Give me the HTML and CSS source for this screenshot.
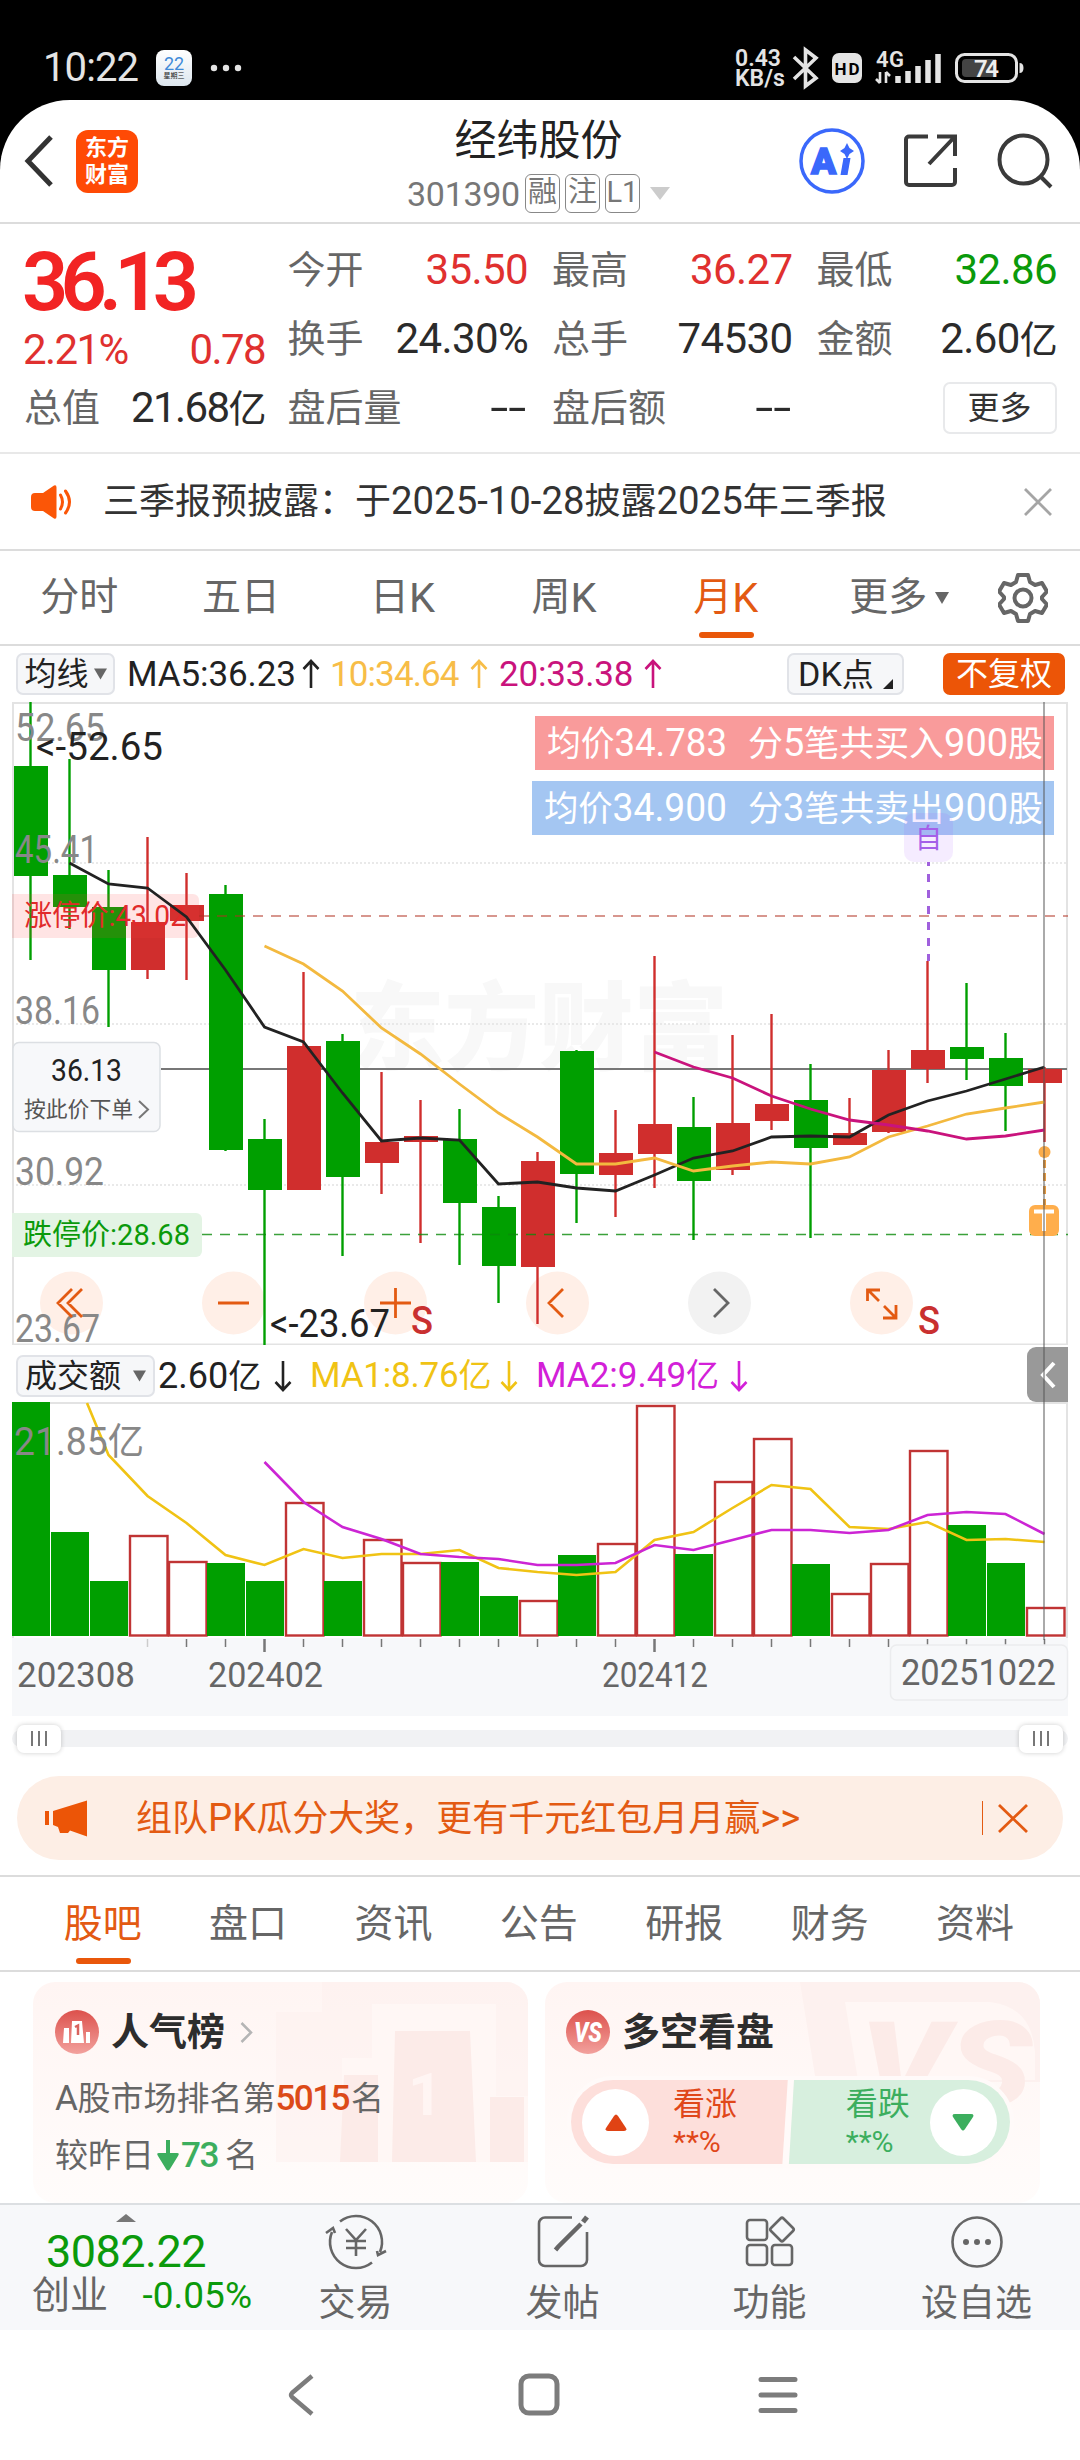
FILE: index.html
```html
<!DOCTYPE html>
<html lang="zh-CN">
<head>
<meta charset="utf-8">
<title>经纬股份 301390</title>
<link rel="stylesheet" href="styles.css">
</head>
<body>
<div class="status">
  <span class="clock">10:22</span>
  <span class="cal"><b>22</b><i>星期三</i></span>
  <svg class="dots" width="32" height="8" viewBox="0 0 32 8"><circle cx="4" cy="4" r="3.2"/><circle cx="16" cy="4" r="3.2"/><circle cx="28" cy="4" r="3.2"/></svg>
  <span class="net"><span>0.43</span><span>KB/s</span></span>
  <svg class="sys" width="290" height="46" viewBox="790 45 290 46">
    <path d="M794 57 L816 78 L805.500 86 V50 L816 58 L794 79" fill="none" stroke="#e4e4e4" stroke-width="3.600"/>
    <rect x="832" y="53" width="30" height="30" rx="7" fill="#e4e4e4"/>
    <text x="847" y="74.500" font-size="17" font-weight="700" text-anchor="middle" textLength="25" fill="#000">HD</text>
    <text x="876" y="67" font-size="22" font-weight="600" textLength="28" fill="#e4e4e4">4G</text>
    <path d="M880 72V83M880 83l-4-4M886 83V72M886 72l4 4" fill="none" stroke="#e4e4e4" stroke-width="2.600"/>
    <path d="M898 83v-7M908 83v-12M918 83v-17M928 83v-23M938 83v-29" stroke="#e4e4e4" stroke-width="5.500"/>
    <rect x="956.500" y="54.500" width="60" height="27" rx="8" fill="none" stroke="#e4e4e4" stroke-width="3"/>
    <path d="M1019.500 63q4 0 4 5t-4 5z" fill="#e4e4e4"/>
    <path d="M966 59h30v18h-30a4 4 0 0 1-4-4v-10a4 4 0 0 1 4-4z" fill="#444"/>
    <text x="974" y="77" font-size="24" font-weight="600" textLength="25" fill="#eee">74</text>
  </svg>
</div>

<main class="sheet">
  <header class="head">
    <div class="head-l">
      <svg width="30" height="52" viewBox="0 0 30 52"><path d="M27 2 4 26 27 50" fill="none" stroke="#333" stroke-width="5"/></svg>
      <div class="logo"><span>东方</span><span>财富</span></div>
    </div>
    <div class="head-c">
      <h1>经纬股份</h1>
      <div class="code"><span class="num">301390</span><em>融</em><em>注</em><em>L1</em><svg width="20" height="13" viewBox="0 0 20 13"><path d="M0 0h20L10 13z" fill="#ccc"/></svg></div>
    </div>
    <div class="head-r">
      <svg width="66" height="66" viewBox="0 0 66 66"><circle cx="33" cy="33" r="31" fill="none" stroke="#3a68fb" stroke-width="3.500"/><text x="12" y="46" font-size="37" font-weight="900" font-family="Lato,sans-serif" fill="#3a68fb" stroke="#3a68fb" stroke-width="1.500" textLength="27">A</text><path d="M44.500 30h7l-3 17h-7z" fill="#3a68fb"/><path d="M48 15l2.500 5 4.500 3-4.500 3-2.500 5-2.500-5-4.500-3 4.500-3z" fill="#3a68fb"/></svg>
      <svg class="ic" width="54" height="54" viewBox="0 0 54 54"><path d="M24 2.500H5a3 3 0 0 0-3 3V48a3 3 0 0 0 3 3H48a3 3 0 0 0 3-3V34M33 2.500H51V22M51 2.500 25 30"/></svg>
      <svg class="ic" width="56" height="56" viewBox="0 0 56 56"><circle cx="26.500" cy="26.500" r="24"/><path d="M43 43 54 54"/></svg>
    </div>
  </header>

  <section class="quote">
    <div class="col c1"><div class="big">36.13</div><div class="cell red"><b>2.21%</b><b>0.78</b></div><div class="cell"><span>总值</span><b>21.68<i>亿</i></b></div></div>
    <div class="col"><div class="cell"><span>今开</span><b class="red">35.50</b></div><div class="cell"><span>换手</span><b>24.30%</b></div><div class="cell"><span>盘后量</span><b class="dd">--</b></div></div>
    <div class="col"><div class="cell"><span>最高</span><b class="red">36.27</b></div><div class="cell"><span>总手</span><b>74530</b></div><div class="cell"><span>盘后额</span><b class="dd">--</b></div></div>
    <div class="col c4"><div class="cell"><span>最低</span><b class="green">32.86</b></div><div class="cell"><span>金额</span><b>2.60<i>亿</i></b></div><div class="cell"><button class="more">更多</button></div></div>
  </section>

  <section class="notice">
    <svg width="42" height="34" viewBox="0 0 42 34"><path d="M4 8h8L23 0.500q2.500-1 2.500 2v29q0 3-2.500 2L12 26H4q-4 0-4-4V12q0-4 4-4z" fill="#fb5607"/><path d="M29.500 10q4 7 0 14M34.500 6q8 11 0 22" fill="none" stroke="#fb5607" stroke-width="3" stroke-linecap="round"/></svg>
    <p>三季报预披露：于<span class="n">2025-10-28</span>披露<span class="n">2025</span>年三季报</p>
    <svg width="28" height="28" viewBox="0 0 28 28"><path d="M1 1 27 27M27 1 1 27" stroke="#a5a5a5" stroke-width="2.800"/></svg>
  </section>

  <nav class="period">
    <a>分时</a><a>五日</a><a>日<span class="n">K</span></a><a>周<span class="n">K</span></a><a class="on">月<span class="n">K</span></a>
    <a>更多<svg width="14" height="12" viewBox="0 0 14 12"><path d="M0 0h14L7 12z" fill="#666"/></svg></a>
    <svg class="gear" width="50" height="50" viewBox="0 0 50 50"><path d="M20 2H30L32 9 37 12 44 10 49 18.500 44 24V26L49 31.500 44 40 37 38 32 41 30 48H20L18 41 13 38 6 40 1 31.500 6 26V24L1 18.500 6 10 13 12 18 9z"/><circle cx="25" cy="25" r="8.500"/></svg>
  </nav>

  <section class="ma">
    <button class="chip w1">均线<svg width="13" height="12" viewBox="0 0 14 12"><path d="M0 0h14L7 12z" fill="#666"/></svg></button>
    <span class="v v1">MA5:36.23</span><svg class="arr" viewBox="0 0 18 30"><path d="M9 29V2M1.500 10 9 2l7.500 8" stroke="#222"/></svg>
    <span class="v v2">10:34.64</span><svg class="arr" viewBox="0 0 18 30"><path d="M9 29V2M1.500 10 9 2l7.500 8" stroke="#f7bd47"/></svg>
    <span class="v v3">20:33.38</span><svg class="arr" viewBox="0 0 18 30"><path d="M9 29V2M1.500 10 9 2l7.500 8" stroke="#c9137c"/></svg>
    <button class="chip w2"><span><span class="n">DK</span>点</span><svg width="10" height="10" viewBox="0 0 10 10"><path d="M10 0v10H0z" fill="#222"/></svg></button>
    <button class="chip hot">不复权</button>
  </section>

  <section class="charts">
    <svg id="kline" width="1080" height="643" viewBox="0 702 1080 643"></svg>
    <div class="legend">
      <button class="chip w3">成交额<svg width="13" height="12" viewBox="0 0 14 12"><path d="M0 0h14L7 12z" fill="#666"/></svg></button>
      <span class="v v4">2.60<i>亿</i></span><svg class="arr" viewBox="0 0 18 32"><path d="M9 1V30M1.500 22 9 30l7.500-8" stroke="#222"/></svg>
      <span class="v v5">MA1:8.76<i>亿</i></span><svg class="arr" viewBox="0 0 18 32"><path d="M9 1V30M1.500 22 9 30l7.500-8" stroke="#f0c314"/></svg>
      <span class="v v6">MA2:9.49<i>亿</i></span><svg class="arr" viewBox="0 0 18 32"><path d="M9 1V30M1.500 22 9 30l7.500-8" stroke="#d320d8"/></svg>
    </div>
    <svg id="volume" width="1080" height="314" viewBox="0 1402 1080 314"></svg>
    <div class="fold"><svg width="16" height="28" viewBox="0 0 16 28"><path d="M14 2 3 14 14 26" fill="none" stroke="#fff" stroke-width="4"/></svg></div>
    <div class="cross"></div>
  </section>

  <div class="range"><div class="track"><span class="grip"><i></i><i></i><i></i></span><span class="grip"><i></i><i></i><i></i></span></div></div>

  <section class="promo">
    <svg width="43" height="37" viewBox="0 0 43 37"><path d="M0 11h4v14H0zM8 11 42 0.500V36.500L25 30.500 23 33H15L13 27 8 25z" fill="#ec5507"/></svg>
    <p>组队<span class="n">PK</span>瓜分大奖，更有千元红包月月赢<span class="n">&gt;&gt;</span></p>
    <i></i>
    <svg width="30" height="29" viewBox="0 0 30 29"><path d="M1 1 29 28M29 1 1 28" stroke="#e35a12" stroke-width="2.800"/></svg>
  </section>

  <nav class="tabs"><a class="on">股吧</a><a>盘口</a><a>资讯</a><a>公告</a><a>研报</a><a>财务</a><a>资料</a></nav>

  <section class="cards">
    <article class="card rank">
      <svg class="bgart" width="260" height="220" viewBox="0 0 260 220"><path d="M54 0h206v180H138V76H54z" fill="#fdf0ee" opacity=".5"/><path d="M8 30H54V76H104V180H8z" fill="#fdf0ee" opacity=".5"/><path d="M104 22h124v92h32v66H74V76h30z" fill="#fff7f5"/><path d="M127 49h75l6 131h-84zM76 93h34v87H72zM222 115h34v65h-34z" fill="#fcebe8"/><text x="140" y="133" font-size="60" font-weight="700" fill="#fff5f3">1</text></svg>
      <h2><svg width="44" height="44" viewBox="0 0 44 44"><defs><linearGradient id="g" x2="0" y2="1"><stop stop-color="#dc514c"/><stop offset="1" stop-color="#f2a19d"/></linearGradient></defs><circle cx="22" cy="22" r="22" fill="url(#g)"/><path d="M9 18h5v15H8zM17 11h10l2 22H16zM31 22h4v11h-4z" fill="#fff"/><path d="M20 17l3-1.500V25" fill="none" stroke="#d9625d" stroke-width="2.500"/></svg>人气榜<svg class="go" width="13" height="21" viewBox="0 0 13 21"><path d="M1.500 1 11 10.500 1.500 20" fill="none" stroke="#b5b5b5" stroke-width="2.500"/></svg></h2>
      <p><span class="n">A</span>股市场排名第<b class="n rk">5015</b>名</p>
      <p>较昨日<svg class="dn" width="22" height="31" viewBox="0 0 22 31"><path d="M9 0h4v13h7q3 0 1 3L13 29q-2 3-4 0L1 16q-2-3 1-3h7z" fill="#3cae5e"/></svg><b class="n g">73</b>名</p>
    </article>
    <article class="card poll">
      <svg class="bgart" width="240" height="220" viewBox="0 0 240 220"><path d="M0 0h240v100H16z" fill="#fdf1ef"/><path d="M45 20H190Q232 25 235 70V98H58z" fill="#fff7f5"/><text x="60" y="124" font-size="118" font-weight="900" font-style="italic" textLength="172" lengthAdjust="spacingAndGlyphs" fill="#fcebe8">VS</text></svg>
      <h2><svg width="44" height="44" viewBox="0 0 44 44"><circle cx="22" cy="22" r="22" fill="url(#g)"/><text x="22" y="32" font-size="27" font-weight="900" font-style="italic" text-anchor="middle" textLength="28" lengthAdjust="spacingAndGlyphs" fill="#fff">VS</text></svg>多空看盘</h2>
      <div class="pill">
        <div class="up"><span class="knob"><svg width="22" height="17" viewBox="0 0 22 17"><path d="M9 2q2-3 4 0l8 12q1.500 3-2 3H3q-3.500 0-2-3z" fill="#e04314"/></svg></span><div class="lab">看涨<small>**%</small></div></div>
        <div class="down"><div class="lab">看跌<small>**%</small></div><span class="knob"><svg width="22" height="17" viewBox="0 0 22 17"><path d="M9 15q2 3 4 0l8-12q1.500-3-2-3H3q-3.500 0-2 3z" fill="#3cae5e"/></svg></span></div>
      </div>
    </article>
  </section>

  <footer class="dock">
    <div class="index"><svg width="20" height="8" viewBox="0 0 20 8"><path d="M0 8h20L10 0z" fill="#777"/></svg><strong>3082.22</strong><div><span>创业</span><em>-0.05%</em></div></div>
    <a><svg width="62" height="56" viewBox="-31 -28 62 56"><path d="M-16-20.500A26 26 0 0 1 24 10M-24-10A26 26 0 0 0 16 20.500M-30-9l7-5 2 5M30 9l-8 4-1-4M-10-13 0-2 10-13M0-2V14M-10-1H10M-10 6H10"/></svg>交易</a>
    <a><svg width="62" height="56" viewBox="-31 -28 62 56"><path d="M9-24.500H-18a6 6 0 0 0-6 6V18a6 6 0 0 0 6 6H18a6 6 0 0 0 6-6V-10"/><path d="M18-18-5 5-7.500 8" stroke-width="4.500"/><path d="M20-20 24-25" stroke-width="5"/></svg>发帖</a>
    <a><svg width="62" height="56" viewBox="-31 -28 62 56"><rect x="-23" y="-22" width="20" height="20" rx="3"/><rect x="-23" y="3" width="20" height="20" rx="3"/><rect x="2" y="3" width="20" height="20" rx="3"/><path d="M10.500-23.500q1.500-1.500 3 0L23-14q1.500 1.500 0 3L13.500-1.500q-1.500 1.500-3 0L1-11q-1.500-1.500 0-3z"/></svg>功能</a>
    <a><svg width="62" height="56" viewBox="-31 -28 62 56"><circle r="24.500"/><g fill="#666" stroke="none"><circle cx="-11" r="3"/><circle r="3"/><circle cx="11" r="3"/></g></svg>设自选</a>
  </footer>

  <div class="navbar">
    <svg width="28" height="44" viewBox="0 0 28 44"><path d="M25 3 5 20q-2 2 0 4L25 41" fill="none" stroke="#7c7c7c" stroke-width="4.500"/></svg>
    <svg width="42" height="44" viewBox="0 0 42 44"><rect x="3" y="3" width="36" height="37" rx="8" fill="none" stroke="#7c7c7c" stroke-width="5"/></svg>
    <svg width="40" height="38" viewBox="0 0 40 38"><path d="M3 3.500H37M3 19H37M3 34.500H37" stroke="#7c7c7c" stroke-width="5" stroke-linecap="round"/></svg>
  </div>
</main>
<script src="chart.js"></script>
</body>
</html>
```
FILE: styles.css
```css
* { box-sizing: border-box; }
body {
  margin: 0;
  width: 1080px;
  background: #000;
  color: #222;
  font-family: Roboto, "Noto Sans CJK SC", sans-serif;
  line-height: 1;
}
svg { display: block; flex: none; }
svg text { font-family: Roboto, "Noto Sans CJK SC", sans-serif; }
i, em { font-style: normal; }
h1, h2, p { margin: 0; font-weight: 400; }
button { font: inherit; color: inherit; padding: 0; margin: 0; }
.n { font-size: 1.065em; }
.red, .cell b.red { color: #e0302f; }
.cell b.green { color: #0b9a0b; }

.status { height: 100px; padding: 36px 0 0 43px; display: flex; align-items: center; color: #e4e4e4; }
.clock { font-size: 40px; width: 113px; letter-spacing: -0.9px; font-weight: 400; }
.cal { width: 36px; height: 36px; border-radius: 8px; background: linear-gradient(#fff, #dde6ee); display: flex; flex-direction: column; align-items: center; padding-top: 5px; }
.cal b { font-size: 18px; font-weight: 400; color: #3f8ad8; }
.cal i { font-size: 7px; color: #222; margin-top: 0; }
.dots { margin-left: 18px; fill: #e4e4e4; }
.net { display: flex; flex-direction: column; margin-left: 493px; width: 55px; font-size: 23px; line-height: 19px; font-weight: 600; gap: 1px; }

.sheet { background: #fff; border-radius: 70px 70px 0 0; height: 2360px; }
.head { height: 124px; border-bottom: 2px solid #dcdcdc; display: grid; grid-template-columns: 280px 1fr 280px; align-items: center; }
.head-l { display: flex; align-items: center; padding-left: 24px; gap: 22px; }
.logo { width: 62px; height: 63px; border-radius: 12px; background: #ff4a05; color: #fff; font-size: 22px; font-weight: 700; display: flex; flex-direction: column; align-items: center; justify-content: center; gap: 3px; line-height: 24px; }
.head-c { display: flex; flex-direction: column; align-items: center; margin-right: 3px; }
.head h1 { font-size: 42px; line-height: 48px; margin-top: 8px; }
.code { display: flex; align-items: center; gap: 5px; margin-top: 9px; color: #777; font-size: 34px; }
.code .num { margin-right: 0; letter-spacing: -0.3px; }
.code em { width: 35px; height: 39px; border: 1.5px solid #888; border-radius: 6px; font-size: 29px; line-height: 35px; text-align: center; }
.code svg { margin-left: 5px; }
.head-r { display: flex; align-items: center; justify-content: flex-end; gap: 39px; padding-right: 27px; }
.ic { fill: none; stroke: #3a3a3a; stroke-width: 4; }

.quote { height: 230px; border-bottom: 2px solid #e8e8e8; display: grid; grid-template-columns: 239px 240px 240px 240px; column-gap: 24.500px; padding: 11px 0 0 24px; }
.col { display: grid; grid-template-rows: 69px 69px 69px; }
.cell { display: flex; justify-content: space-between; align-items: center; font-size: 38px; color: #666; }
.cell b { font-weight: 400; font-size: 42px; color: #2b2b2b; letter-spacing: -0.6px; margin-right: -0.6px; }
.cell b i { font-size: 38px; }
.cell b.dd { letter-spacing: 0; transform: scaleX(1.55); transform-origin: right; margin-right: 1px; }
.c1 .cell b { letter-spacing: -1.6px; margin-right: -2px; }
.c1 .cell.red b { color: #e0302f; }
.c1 .cell.red b:first-child { margin-left: -1px; }
.c1 { grid-template-rows: 92px 46px 69px; }
.big { font-size: 81px; font-weight: 600; color: #f22424; letter-spacing: -7.800px; align-self: center; margin: 2px 0 0 -2px; }
.more { margin-left: auto; width: 114px; height: 52px; border: 2px solid #e8e9eb; border-radius: 7px; background: #fff; font-size: 32px; color: #333; }

.notice { height: 97px; border-bottom: 2px solid #dcdcdc; display: flex; align-items: center; padding: 0 28px 0 31px; }
.notice p { font-size: 36px; margin-left: 30px; flex: 1; color: #333; }

.period { height: 95px; border-bottom: 2px solid #dcdcdc; display: grid; grid-template-columns: repeat(6, 161.6px) 1fr; align-items: center; color: #666; font-size: 39px; }
.period a, .tabs a { display: flex; align-items: center; justify-content: center; height: 100%; position: relative; }
.period a { padding-right: 3px; }
.period a svg { margin: 0 -24px 0 8px; }
.on { color: #e35a12; }
.on::after { content: ""; position: absolute; left: 50%; margin-left: -28px; bottom: 6px; width: 55px; height: 6px; border-radius: 3px; background: #e9570a; }
.gear { margin-left: 28px; fill: none; stroke: #666; stroke-width: 4; stroke-linejoin: round; }

.ma { height: 56px; display: flex; align-items: center; padding-left: 16px; }
.chip { height: 42px; border: 2px solid #e1e3e8; border-radius: 7px; background: #f6f7f9; font-size: 32px; display: flex; align-items: center; justify-content: center; flex: none; gap: 5px; }
.w2 { width: 117px; margin-left: auto; gap: 9px; }
.w1 { width: 99px; }
.w2 svg { margin-top: 20px; }
.hot { width: 122px; margin: 0 15px 0 39px; background: #ec5507; border-color: #ec5507; color: #fff; }
.v { font-size: 35px; white-space: nowrap; flex: none; }
.v i { font-size: 33px; }
.arr { width: 18px; height: 30px; fill: none; stroke-width: 2.6; }
.v1 { margin-left: 12px; width: 175px; letter-spacing: -0.1px; }
.v2 { margin-left: 10px; width: 140px; color: #f7bd47; letter-spacing: -0.9px; }
.v3 { margin-left: 11px; width: 145px; color: #c9137c; letter-spacing: -0.2px; }

.charts { position: relative; height: 1015px; }
.legend { height: 57px; display: flex; align-items: center; padding: 4px 0 0 16px; }
.legend .arr { height: 32px; }
.w3 { width: 139px; gap: 12px; }
.v4 { margin-left: 3px; width: 116px; font-size: 36px; }
.v5 { margin-left: 18px; width: 190px; color: #f0c314; letter-spacing: -0.2px; }
.v6 { margin-left: 18px; width: 194px; color: #d320d8; }
.fold { position: absolute; left: 1027px; top: 645px; width: 41px; height: 55px; border-radius: 9px 0 0 9px; background: #999; display: flex; align-items: center; justify-content: center; }
.cross { position: absolute; left: 1043px; top: 0; width: 2px; height: 938px; background: #555; opacity: .5; }

.range { height: 59px; padding: 13px 12px 0; }
.track { height: 17px; border-radius: 9px; background: #f1f2f4; display: flex; align-items: center; justify-content: space-between; padding: 0 5px; }
.grip { width: 44px; height: 28px; border-radius: 7px; background: #fff; box-shadow: 0 0 5px #0003; display: flex; align-items: center; justify-content: center; gap: 5px; }
.grip i { width: 2px; height: 15px; background: #777; }

.promo { margin: 0 17px; height: 84px; border-radius: 42px; background: #fdeee5; color: #e35a12; display: flex; align-items: center; padding: 0 35px 0 28px; }
.promo p { font-size: 36px; margin-left: 48px; flex: 1; }
.promo i { width: 1.5px; height: 34px; background: #e35a12; margin-right: 15px; }

.tabs { margin-top: 15px; height: 97px; border-top: 2px solid #dcdcdc; border-bottom: 2px solid #dcdcdc; display: grid; grid-template-columns: repeat(7, 145.4px); padding: 0 31px; font-size: 39px; color: #666; }
.tabs a { padding: 2px 2px 0 0; }

.cards { height: 233px; padding: 10px 33px 0; display: flex; gap: 17px; border-bottom: 2px solid #dcdfe2; }
.card { width: 495px; height: 221px; border-radius: 22px; background: linear-gradient(#fff5f3, #fffcfb); padding: 27px 22px 0; position: relative; overflow: hidden; }
.poll { padding-left: 21px; }
.bgart { position: absolute; right: 0; top: 0; }
.card h2, .card p, .pill { position: relative; }
.card h2 { display: flex; align-items: center; gap: 12px; font-size: 38px; font-weight: 700; height: 46px; color: #2d2d2d; }
.card .go { margin-left: 3px; }
.card p { font-size: 33px; color: #666; height: 57px; display: flex; align-items: center; }
.card h2 + p { margin-top: 15px; }
.card p .n { letter-spacing: -0.5px; }
.card b { color: #dc4a18; font-weight: 500; }
.card b.rk { letter-spacing: -1.6px; margin-right: 2px; }
.card b.g { color: #3cae5e; margin: 0 7px 0 2px; letter-spacing: -1.5px; }
.dn { margin-left: 3px; }
.pill { margin: 21px 0 0 1px; width: 447px; height: 92px; border: 4px solid #fffaf9; border-radius: 46px; overflow: hidden; display: flex; background: #fffaf9; }
.up, .down { display: flex; align-items: center; font-size: 32px; }
.up { width: 219px; background: #fddfdb; color: #e0471a; clip-path: polygon(0 0, 100% 0, 97.5% 100%, 0 100%); padding-left: 11px; gap: 24px; }
.down { width: 224px; background: #d7efde; color: #3cae5e; clip-path: polygon(2.8% 0, 100% 0, 100% 100%, 0.5% 100%); padding-left: 58px; gap: 20px; }
.knob { width: 67px; height: 67px; border-radius: 50%; background: #fff; display: flex; align-items: center; justify-content: center; }
.lab { display: flex; flex-direction: column; gap: 7px; }
.lab small { font-size: 30px; }

.dock { height: 125px; background: #f7f8fa; display: grid; grid-template-columns: 252px repeat(4, 207px); color: #666; }
.dock a { display: flex; flex-direction: column; align-items: center; padding-top: 9px; font-size: 37px; gap: 15px; }
.dock a svg { fill: none; stroke: #666; stroke-width: 2.6; }
.index { display: flex; flex-direction: column; align-items: center; padding-top: 9px; }
.index strong { font-weight: 400; font-size: 45px; color: #0b9a0b; margin-top: 7px; letter-spacing: -0.5px; }
.index div { display: flex; align-items: center; align-self: flex-start; margin: 2px 0 0 32px; width: 220px; font-size: 38px; justify-content: space-between; }
.index em { font-size: 37px; color: #0b9a0b; }
.navbar { height: 130px; display: flex; align-items: center; padding: 0 0 0 287px; }
.navbar svg:nth-child(2) { margin-left: 203px; }
.navbar svg:nth-child(3) { margin-left: 198px; }
```
FILE: chart.js
```js
const UP = '#d02e2d', DOWN = '#009f00';
const cx = i => 30.5 + 39 * i;

// colour, high, body top, body bottom, low
const candles = [
  ['g',702,766,876,960],['g',759,875,907,929],['g',870,907,970,1027],['r',837,922,970,979],['r',873,905,921,980],
  ['g',885,894,1150,1151],['g',1119,1139,1190,1345],['r',972,1046,1190,1190],['g',1034,1041,1177,1256],['r',1072,1142,1163,1194],
  ['r',1100,1136,1142,1243],['g',1109,1139,1203,1265],['g',1196,1207,1266,1303],['r',1152,1161,1267,1324],['g',1050,1051,1174,1223],
  ['r',1110,1153,1175,1217],['r',956,1124,1154,1188],['g',1097,1127,1181,1240],['r',1035,1123,1170,1175],['r',1014,1104,1121,1130],
  ['g',1064,1100,1148,1238],['r',1098,1133,1145,1145],['r',1050,1070,1132,1133],['r',961,1050,1069,1083],['g',983,1047,1059,1080],
  ['g',1033,1058,1086,1131],['r',1067,1069,1083,1142]
];
const ma5 = [863,884,888,917,970,1027,1042,1093,1141,1138,1140,1184,1182,1188,1191,1175,1158,1151,1137,1136,1137,1115,1101,1091,1079,1067];
const ma10 = [946,964,991,1028,1054,1084,1113,1137,1164,1164,1158,1171,1166,1162,1164,1157,1137,1126,1114,1108,1102];
const ma20 = [1052,1067,1078,1096,1109,1120,1125,1131,1139,1136,1130];
const volumes = [1402,1532,1581,1536,1562,1563,1581,1503,1581,1540,1563,1562,1596,1601,1555,1544,1406,1554,1482,1439,1564,1594,1564,1451,1525,1563,1608];
const vma1 = [1455,1496,1523,1555,1565,1549,1558,1554,1554,1550,1568,1572,1575,1572,1540,1532,1508,1485,1489,1527,1529,1522,1540,1539,1542];
const vma2 = [1462,1502,1527,1539,1554,1557,1559,1565,1565,1563,1545,1550,1540,1530,1530,1533,1530,1515,1512,1514,1534];

const line = (ys, start, color, w, lead = '') =>
  `<polyline points="${lead}${ys.map((y, k) => cx(start + k) + ',' + y).join(' ')}" fill="none" stroke="${color}" stroke-width="${w}"/>`;
const hline = (y, x1, x2, color, w, dash = '') => `<path d="M${x1} ${y}H${x2}" stroke="${color}" stroke-width="${w}" stroke-dasharray="${dash}"/>`;
const text = (s, x, y, size, len, color, extra = '') =>
  `<text x="${x}" y="${y}" font-size="${size}" textLength="${len}" lengthAdjust="spacingAndGlyphs" fill="${color}" ${extra}>${s}</text>`;
const num = s => `<tspan font-size="38">${s}</tspan>`;
const round = (x, color) => `<circle cx="${x}" cy="1303" r="31.5" fill="${color}"/>`;

let k = '<path d="M13 1345V703H1067V1345" fill="none" stroke="#e3e3e3" stroke-width="2"/>';
k += hline(1344.5, 12, 1068, '#e3e3e3', 2);
k += text('东方财富', 350, 1062, 96, 378, '#f8f8f8', 'font-weight="900"');
[863, 1024, 1185].forEach(y => { k += hline(y, 12, 1068, '#e2e2e2', 1.5, '2 2'); });
['#ffefe7', '#ffefe7', '#ffefe7', '#ffefe7', '#f2f2f2', '#ffefe7'].forEach((c, i) => { k += round(71.5 + 162 * i, c); });
k += hline(1069, 161, 1067, '#777', 1.8);
candles.forEach(([c, h, t, b, l], i) => {
  const f = c === 'r' ? UP : DOWN;
  k += `<path d="M${cx(i)} ${h}V${l}" stroke="${f}" stroke-width="2.4"/><rect x="${cx(i) - 16.5}" y="${t}" width="34" height="${b - t}" fill="${f}"/>`;
});
k += hline(916, 199, 1068, '#b03020', 1.8, '10 8').replace('/>', ' opacity=".5"/>');
k += hline(1234.5, 202, 1068, '#0b8a0b', 1.6, '10 8').replace('/>', ' opacity=".8"/>');
k += '<path d="M12 894H193a6 6 0 0 1 6 6V932a6 6 0 0 1-6 6H12z" fill="#ff4040" opacity=".14"/>';
k += '<path d="M12 1213H196a6 6 0 0 1 6 6V1251a6 6 0 0 1-6 6H12z" fill="#e3f4e4"/>';
k += text('涨停价:43.02', 24, 926, 29, 162, '#e12a2a') + text('跌停价:28.68', 23, 1245, 29, 167, '#0b9a0b');
k += line(ma5, 1, '#222', 2.8) + line(ma10, 6, '#f3b93f', 2.8) + line(ma20, 16, '#c9137c', 2.8);
[['52.65', 741, 90], ['45.41', 863, 83], ['38.16', 1024, 85], ['30.92', 1185, 89], ['23.67', 1342, 85]]
  .forEach(([s, y, w]) => { k += text(s, 15, y, 38, w, '#888'); });
k += text('&lt;-52.65', 36, 760, 38, 127, '#222') + text('&lt;-23.67', 270, 1337, 38, 120, '#222');
k += text('S', 411, 1334, 39, 22, '#c93030', 'font-weight="500"') + text('S', 918, 1334, 39, 22, '#c93030', 'font-weight="500"');
k += '<rect x="13" y="1042.500" width="147" height="89" rx="6" fill="#f7f8fa" stroke="#dcdfe3" stroke-width="1.500"/>';
k += text('36.13', 51, 1081, 32, 71, '#222') + text('按此价下单', 24, 1117, 22, 109, '#555');
k += '<path d="M139 1101 148 1109.500 139 1118" fill="none" stroke="#777" stroke-width="2"/>';
k += '<rect x="535" y="716" width="519" height="54" fill="#f99b9b"/><rect x="532" y="781" width="522" height="54" fill="#a4c6f2"/>';
k += text('均价' + num('34.783'), 547, 756, 35, 180, '#fff') + text('分' + num(5) + '笔共买入' + num(900) + '股', 748, 756, 35, 295, '#fff');
k += text('均价' + num('34.900'), 544, 821, 35, 183, '#fff') + text('分' + num(3) + '笔共卖出' + num(900) + '股', 748, 821, 35, 295, '#fff');
k += '<rect x="904" y="813" width="49" height="49" rx="10" fill="#a040ff" opacity=".1"/>' + text('自', 915, 848, 27, 27, '#a45fe8');
k += '<path d="M928.500 862V961" stroke="#a060dd" stroke-width="3" stroke-dasharray="4 8 8 8 8 8 8 8 8 8 8 8 8 8"/>';
k += '<circle cx="1044.500" cy="1152" r="6" fill="#faac4b"/><path d="M1044.500 1160V1205" stroke="#e89a3e" stroke-width="3" stroke-dasharray="8 5"/><rect x="1029" y="1205" width="30" height="31" rx="6" fill="#ffae4c"/><path d="M1034 1211.500h20M1044 1211v20" stroke="#fff" stroke-width="4"/>';
k += '<g fill="none" stroke="#e35a12" stroke-width="2.800"><path d="M72 1289 58 1303 72 1317M82 1289 68 1303 82 1317M218 1303H249M380 1303H411M395.500 1288V1318M563 1289 549 1303 563 1317M879 1301 868 1290M867.500 1301V1290H880M884 1306 895 1317M896 1305V1318H883"/><path d="M714 1289 728 1303 714 1317" stroke="#666"/></g>';
document.getElementById('kline').innerHTML = k;

let v = '<path d="M13 1638V1403H1067V1638" fill="none" stroke="#e3e3e3" stroke-width="2"/><rect x="12" y="1638" width="1056" height="78" fill="#f7f8fa"/>';
volumes.forEach((y, i) => {
  const x = 12 + 39 * i;
  v += candles[i][0] === 'r'
    ? `<rect x="${x + 1}" y="${y}" width="37.500" height="${1635.500 - y}" fill="#fff" stroke="#c03434" stroke-width="2.400"/>`
    : `<rect x="${x}" y="${y}" width="38" height="${1636 - y}" fill="${DOWN}"/>`;
});
v += line(vma1, 2, '#f0c314', 2.6, '87,1403 ') + line(vma2, 6, '#cc25d4', 2.6);
for (let i = 3; i < 27; i++) {
  const major = i === 6 || i === 16;
  v += `<path d="M${cx(i)} 1639V${major ? 1652 : 1647}" stroke="${i === 3 ? '#ccc' : '#777'}" stroke-width="${major ? 2.500 : 1.500}"/>`;
}
v += '<rect x="890.500" y="1645" width="177" height="55" rx="6" fill="#f7f8fa" stroke="#ebecee" stroke-width="1.500"/>';
v += text(num('21.85') + '亿', 14, 1455, 37, 130, '#888') + text('202308', 17, 1687, 35, 118, '#666') + text('202402', 208, 1687, 35, 115, '#666')
  + text('202412', 602, 1687, 35, 106, '#666') + text('20251022', 901, 1685, 37, 155, '#666');
document.getElementById('volume').innerHTML = v;
```
